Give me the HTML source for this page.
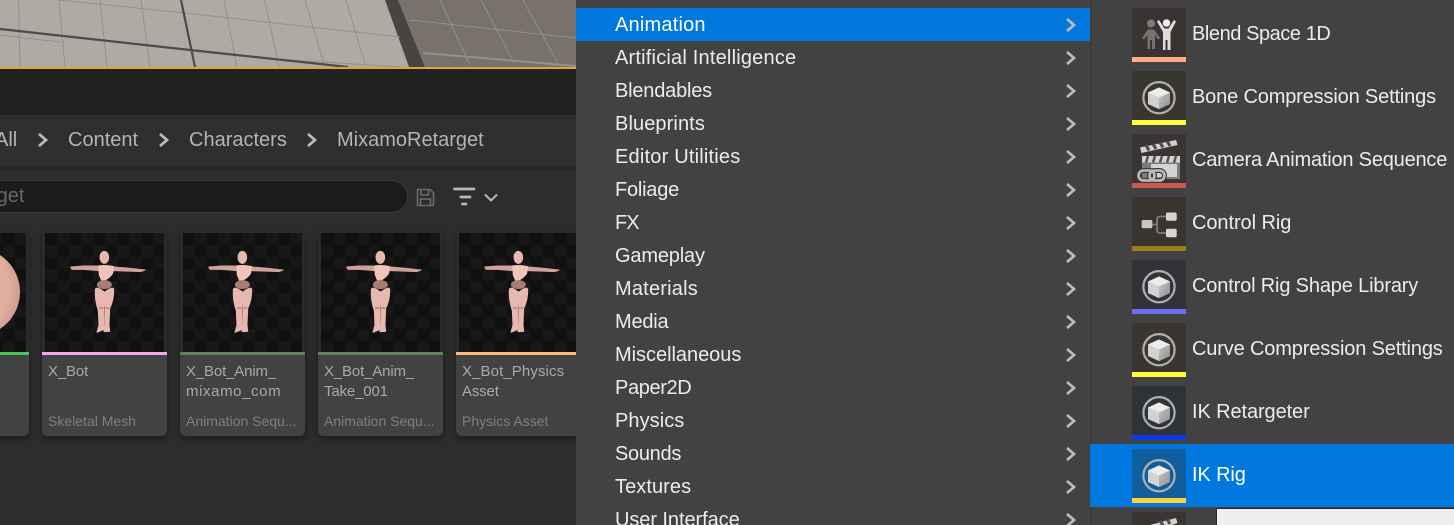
<!DOCTYPE html>
<html><head><meta charset="utf-8"><style>
html,body{margin:0;padding:0;background:#2d2d2d;overflow:hidden;width:1454px;height:525px}
#r{position:relative;width:1454px;height:525px;overflow:hidden;background:#2d2d2d;font-family:"Liberation Sans",sans-serif}
#r div,#r span,#r svg{position:absolute}
.t{white-space:nowrap}
.bc{color:#b4b4b4;font-size:20px;line-height:24px;top:128px;letter-spacing:0}
.card{width:125px;height:206px;top:230px;background:#2b2b2b;border-radius:6px;box-shadow:0 3px 8px rgba(0,0,0,.4);overflow:hidden}
.low{left:0;top:125px;width:125px;height:81px;background:#424242}
.img{left:3px;top:3px;width:119px;height:119px;background:conic-gradient(#171717 25%,#101010 0 50%,#171717 0 75%,#101010 0) 0 0/24px 24px;overflow:hidden}
.img svg{left:5px;top:7px;filter:blur(.35px)}
.bar{left:0;top:122px;width:125px;height:3px}
.n{left:6px;color:#a9a9a9;font-size:15px;line-height:20px;top:132px;letter-spacing:-.15px}
.n2{top:152px}
.ty{left:6px;top:182px;color:#7f7f7f;font-size:14px;line-height:18px}
.m{left:615px;color:#ececec;font-size:20px;line-height:24px}
.s{left:1192px;color:#ececec;font-size:20px;line-height:24px}
.ic{left:1132px;width:54px;height:54px}
.ic i{position:absolute;left:0;bottom:0;width:54px;height:5px;display:block}
.c{left:1065px;color:#bcbcbc}
</style></head><body><div id="r">

<svg width="0" height="0" style="left:0;top:0">
<defs>
<linearGradient id="cg" x1="0" x2="1" y1="0" y2="1"><stop offset="0" stop-color="#c4c4c4"/><stop offset="1" stop-color="#8e8e8e"/></linearGradient>
<symbol id="fig" viewBox="0 0 330 330">
<g fill="#e6b8b0" stroke="#e6b8b0" stroke-width="3" stroke-linejoin="round">
<ellipse cx="163" cy="52" rx="13" ry="18"/>
<path d="M147 78L100 78L62 81L66 88L100 88L147 92Z" fill="#d0a29a" stroke="#d0a29a"/>
<path d="M180 80L230 84L285 90L272 95L225 93L188 92Z" fill="#d0a29a" stroke="#d0a29a"/>
<path d="M146 78Q165 74 191 80L188 100Q178 116 156 124L148 105Z" fill="#eec4bc" stroke="#eec4bc"/>
<path d="M136 148Q140 138 163 156L163 180L161 205L161 255L163 268L141 277L147 255L145 212Q134 180 136 148Z"/>
<path d="M191 148Q188 138 165 156L165 180L165 205L164 255L162 275L179 274L177 255L179 205Q192 180 191 148Z"/>
<ellipse cx="163" cy="134" rx="21" ry="12" fill="#a87c72" stroke="#a87c72"/>
<path d="M147 204h13M166 204h12" stroke="#94685f" stroke-width="3"/>
</g>
</symbol>
<symbol id="cube" viewBox="0 0 54 54">
<circle cx="27" cy="26.7" r="15.6" fill="none" stroke="#b0b0b0" stroke-width="2.2"/>
<path d="M27 16.5L38 21.5V33L27 38L16 33V21.500Z" fill="#c8c8c8"/>
<path d="M27 16.5L38 21.5L27 26.5L16 21.5Z" fill="#ececec"/>
<path d="M16 21.5L27 26.5V38L16 33Z" fill="#d2d2d2"/>
<path d="M38 21.5L27 26.5V38L38 33Z" fill="url(#cg)"/>
</symbol>
<symbol id="chev" viewBox="0 0 12 14">
<path d="M2 1L9 7L2 13" fill="none" stroke="currentColor" stroke-width="2.7"/>
</symbol>
</defs>
</svg>

<!-- viewport -->
<svg style="left:0;top:0" width="576" height="69" viewBox="0 0 576 69">
<rect width="576" height="69" fill="#b0aaa5"/>
<path d="M398 0H576V67H425Z" fill="#79726c"/>
<path d="M385 0H398L425 67H409Z" fill="#474542"/>
<g stroke="#95908a" stroke-width="1" fill="none">
<path d="M18.5 0L20 67M59 0L65 67M100 0L107 67M141 0L150 67M224 0L237 67M264.500 0L279 67M305 0L325 67M346 0L366 67"/>
<path d="M59 0L185 13L400 37M0 35L60 42M290 60L400 67"/>
</g>
<path d="M0 29L190 50L348 67" stroke="#4e4b48" stroke-width="2.2" fill="none"/>
<path d="M181 0L195 67" stroke="#4e4b48" stroke-width="2.2" fill="none"/>
<g stroke="#95908a" stroke-width="1" fill="none">
<path d="M440 0L470 65M481 0L514 63M523 0L558 63M410 20L576 38"/>
<path d="M423 53L576 66" stroke-width="2"/>
</g>
<rect y="67" width="576" height="2" fill="#e8a02e"/>
</svg>
<div style="left:0;top:69px;width:576px;height:46px;background:#212121"></div>
<div style="left:0;top:115px;width:576px;height:52px;background:#2f2f2f"></div>
<div style="left:0;top:167px;width:576px;height:3px;background:#282828"></div>

<span class="t bc" style="left:-5px">All</span>
<svg style="left:37px;top:133px;color:#bdbdbd" width="12" height="14"><use href="#chev"/></svg>
<span class="t bc" style="left:68px">Content</span>
<svg style="left:158px;top:133px;color:#bdbdbd" width="12" height="14"><use href="#chev"/></svg>
<span class="t bc" style="left:189px">Characters</span>
<svg style="left:306px;top:133px;color:#bdbdbd" width="12" height="14"><use href="#chev"/></svg>
<span class="t bc" style="left:337px">MixamoRetarget</span>

<div style="left:-30px;top:180px;width:436px;height:31px;background:#1b1b1b;border:1px solid #3a3a3a;border-radius:17px"></div>
<span class="t" style="left:-10px;top:184px;color:#686868;font-size:20px;line-height:24px">rget</span>
<svg style="left:416px;top:187px" width="19" height="20" viewBox="0 0 19 20" fill="none" stroke="#6c6c6c" stroke-width="1.6">
<path d="M1.500 2.500H14L17.500 6V18.500H1.500Z"/><path d="M5 2.500V8H12.500V2.500M4.500 18.500V12H14.500V18.500"/>
</svg>
<svg style="left:452px;top:186px" width="48" height="22" viewBox="0 0 48 22" fill="none" stroke="#b8b8b8" stroke-linecap="round">
<path d="M2.500 3H22" stroke-width="2.800"/><path d="M9 11H18" stroke-width="2.800"/><path d="M10.500 18H14" stroke-width="2.800"/>
<path d="M33 8.500L39 14.500L45 8.500" stroke-width="2" stroke-linecap="butt"/>
</svg>

<!-- cards -->
<div class="card" style="left:-96px">
<div class="low"></div>
<div class="img">
<div style="left:25px;top:15px;width:88px;height:88px;border-radius:50%;background:radial-gradient(circle at 30% 45%,#e8bcb0,#e0ae9f 65%,#b08274 100%)"></div>
</div>
<div class="bar" style="background:#4cc35a"></div>
</div>
<div class="card" style="left:42px">
<div class="low"></div>
<div class="img"><svg width="110" height="110"><use href="#fig"/></svg></div>
<div class="bar" style="background:#f0a8e8"></div>
<span class="t n">X_Bot</span>
<span class="t ty">Skeletal Mesh</span>
</div>
<div class="card" style="left:180px">
<div class="low"></div>
<div class="img"><svg width="110" height="110"><use href="#fig"/></svg></div>
<div class="bar" style="background:#5c8458"></div>
<span class="t n">X_Bot_Anim_</span><span class="t n n2" style="letter-spacing:.6px">mixamo_com</span>
<span class="t ty">Animation Sequ...</span>
</div>
<div class="card" style="left:318px">
<div class="low"></div>
<div class="img"><svg width="110" height="110"><use href="#fig"/></svg></div>
<div class="bar" style="background:#5c8458"></div>
<span class="t n">X_Bot_Anim_</span><span class="t n n2">Take_001</span>
<span class="t ty">Animation Sequ...</span>
</div>
<div class="card" style="left:456px">
<div class="low"></div>
<div class="img"><svg width="110" height="110"><use href="#fig"/></svg></div>
<div class="bar" style="background:#fcb878"></div>
<span class="t n" style="letter-spacing:.1px">X_Bot_Physics</span><span class="t n n2">Asset</span>
<span class="t ty">Physics Asset</span>
</div>

<!-- left menu -->
<div style="left:576px;top:0;width:878px;height:525px;background:#424242"></div>
<div style="left:576px;top:8px;width:514px;height:33px;background:#0078de"></div>
<div style="left:1090px;top:0;width:2px;height:525px;background:#3c3c3c"></div>

<span class="t m" style="top:13px;color:#fff;letter-spacing:.2px">Animation</span>
<span class="t m" style="top:46px;letter-spacing:.2px">Artificial Intelligence</span>
<span class="t m" style="top:79px;letter-spacing:-.2px">Blendables</span>
<span class="t m" style="top:112px;letter-spacing:.1px">Blueprints</span>
<span class="t m" style="top:145px;letter-spacing:.2px">Editor Utilities</span>
<span class="t m" style="top:178px;letter-spacing:-.23px">Foliage</span>
<span class="t m" style="top:211px;letter-spacing:-1px">FX</span>
<span class="t m" style="top:244px;letter-spacing:-.17px">Gameplay</span>
<span class="t m" style="top:277px;letter-spacing:.2px">Materials</span>
<span class="t m" style="top:310px;letter-spacing:-.2px">Media</span>
<span class="t m" style="top:343px;letter-spacing:-.03px">Miscellaneous</span>
<span class="t m" style="top:376px;letter-spacing:-.37px">Paper2D</span>
<span class="t m" style="top:409px;letter-spacing:.06px">Physics</span>
<span class="t m" style="top:442px;letter-spacing:-.3px">Sounds</span>
<span class="t m" style="top:475px;letter-spacing:.07px">Textures</span>
<div style="left:615px;top:508px;width:200px;height:17px;overflow:hidden"><span class="t" style="left:0;top:0;color:#ececec;font-size:20px;line-height:24px;letter-spacing:-.07px">User Interface</span></div>

<svg class="c" style="top:18px" width="12" height="14"><use href="#chev"/></svg>
<svg class="c" style="top:51px" width="12" height="14"><use href="#chev"/></svg>
<svg class="c" style="top:84px" width="12" height="14"><use href="#chev"/></svg>
<svg class="c" style="top:117px" width="12" height="14"><use href="#chev"/></svg>
<svg class="c" style="top:150px" width="12" height="14"><use href="#chev"/></svg>
<svg class="c" style="top:183px" width="12" height="14"><use href="#chev"/></svg>
<svg class="c" style="top:216px" width="12" height="14"><use href="#chev"/></svg>
<svg class="c" style="top:249px" width="12" height="14"><use href="#chev"/></svg>
<svg class="c" style="top:282px" width="12" height="14"><use href="#chev"/></svg>
<svg class="c" style="top:315px" width="12" height="14"><use href="#chev"/></svg>
<svg class="c" style="top:348px" width="12" height="14"><use href="#chev"/></svg>
<svg class="c" style="top:381px" width="12" height="14"><use href="#chev"/></svg>
<svg class="c" style="top:414px" width="12" height="14"><use href="#chev"/></svg>
<svg class="c" style="top:447px" width="12" height="14"><use href="#chev"/></svg>
<svg class="c" style="top:480px" width="12" height="14"><use href="#chev"/></svg>
<svg class="c" style="top:513px" width="12" height="12" viewBox="0 0 12 12"><path d="M2 1L9 7L2 13" fill="none" stroke="currentColor" stroke-width="2.7"/></svg>

<!-- submenu -->
<div style="left:1090px;top:444px;width:364px;height:63px;background:#0078de"></div>

<div class="ic" style="top:8px;background:#393432"><i style="background:#ffad85"></i>
<svg style="left:0;top:0" width="54" height="54" viewBox="0 0 54 54">
<circle cx="19" cy="15.500" r="4" fill="#7c7c7c"/>
<path d="M10 30L16 21.500H22L28 30L26 31.500L23 27V41H20V32H18V41H15.500V27L12 31.500Z" fill="#747474"/>
<circle cx="34.500" cy="15" r="3.700" fill="#ececec"/>
<path d="M25 13.500L27 12L32.500 20.500H36.500L42 12L44 13.500L38.500 24V42H35.500V32H33.500V42H31V24Z" fill="#dedede"/>
</svg></div>
<span class="t s" style="top:22px;letter-spacing:-.44px">Blend Space 1D</span>

<div class="ic" style="top:71px;background:#38362e"><i style="background:#ffff40"></i><svg style="left:0;top:0" width="54" height="54"><use href="#cube"/></svg></div>
<span class="t s" style="top:85px;letter-spacing:-.16px">Bone Compression Settings</span>

<div class="ic" style="top:134px;background:#3a3432"><i style="background:#c85a55"></i>
<svg style="left:0;top:0" width="54" height="54" viewBox="0 0 54 54">
<path d="M8 13.500L44 6L45.500 11L9.500 19Z" fill="#d0d0d0"/>
<path d="M14 11L17 16.500M21 10L24 15M28 8.500L31 13.500M35 7L38 12" stroke="#4a4a4a" stroke-width="3"/>
<rect x="10" y="22" width="38" height="6.500" fill="#d4d4d4"/>
<path d="M16 22L14 28.500M23 22L21 28.500M30 22L28 28.500M37 22L35 28.500M44 22L42 28.500" stroke="#555" stroke-width="2.500"/>
<rect x="10" y="28.500" width="38" height="16.500" fill="#7c7c7c"/>
<rect x="19" y="30" width="26" height="13" fill="#d2d2d2"/>
<g fill="none" stroke="#3e3e3e" stroke-width="5">
<rect x="6.500" y="36.500" width="16" height="10" rx="5"/>
<rect x="17.500" y="36.500" width="15" height="10" rx="5"/>
</g>
<g fill="none" stroke="#bcbcbc" stroke-width="2.600">
<rect x="6.500" y="36.500" width="16" height="10" rx="5"/>
<rect x="17.500" y="36.500" width="15" height="10" rx="5"/>
</g>
</svg></div>
<span class="t s" style="top:148px;letter-spacing:-.2px">Camera Animation Sequence</span>

<div class="ic" style="top:197px;background:#38352f"><i style="background:#968020"></i>
<svg style="left:0;top:0" width="54" height="54" viewBox="0 0 54 54">
<path d="M20 27.500H25M34 19.500H28Q25 19.500 25 22.500V33Q25 36 28 36H34" fill="none" stroke="#7c7c7c" stroke-width="1.800"/>
<rect x="9.700" y="23" width="10.600" height="8.300" rx="1.500" fill="#c8c8c8"/>
<rect x="34" y="15.500" width="10.700" height="8.300" rx="1.500" fill="#d4d4d4"/>
<rect x="34" y="31.800" width="10.700" height="8.500" rx="1.500" fill="#d4d4d4"/>
</svg></div>
<span class="t s" style="top:211px;letter-spacing:-.07px">Control Rig</span>

<div class="ic" style="top:260px;background:#32323a"><i style="background:#6a70f0"></i><svg style="left:0;top:0" width="54" height="54"><use href="#cube"/></svg></div>
<span class="t s" style="top:274px;letter-spacing:-.16px">Control Rig Shape Library</span>

<div class="ic" style="top:323px;background:#38362e"><i style="background:#ffff40"></i><svg style="left:0;top:0" width="54" height="54"><use href="#cube"/></svg></div>
<span class="t s" style="top:337px;letter-spacing:-.15px">Curve Compression Settings</span>

<div class="ic" style="top:386px;background:#30323a"><i style="background:#0a3ce0"></i><svg style="left:0;top:0" width="54" height="54"><use href="#cube"/></svg></div>
<span class="t s" style="top:400px;letter-spacing:-.1px">IK Retargeter</span>

<div class="ic" style="top:449px;background:#0f5f9f"><i style="background:#ffd23c"></i><svg style="left:0;top:0" width="54" height="54"><use href="#cube"/></svg></div>
<span class="t s" style="top:463px;color:#fff;letter-spacing:-.13px">IK Rig</span>

<div class="ic" style="top:512px;height:13px;background:#3a3432;overflow:hidden">
<svg style="left:0;top:0" width="54" height="13" viewBox="0 0 54 13">
<path d="M18 13L44 6L45.500 11L40 13Z" fill="#d0d0d0"/>
<path d="M28 8.500L31 13.500M35 7L38 12" stroke="#4a4a4a" stroke-width="3"/>
</svg></div>
<div style="left:1216px;top:508px;width:237px;height:16px;background:#efefef;border-top:1px solid #2a2a2a;border-left:1px solid #2a2a2a"></div>

</div></body></html>
